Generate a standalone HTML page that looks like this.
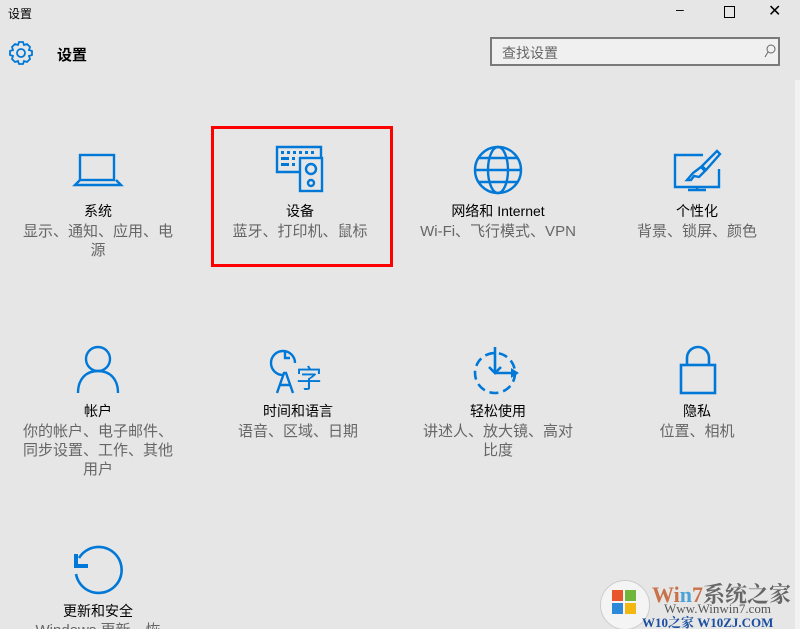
<!DOCTYPE html>
<html><head><meta charset="utf-8"><style>
html,body{margin:0;width:800px;height:629px;overflow:hidden}
body{background:#e6e6e6;font-family:"Liberation Sans","Noto Sans CJK SC",sans-serif;position:relative}
.a{position:absolute}
.t{position:absolute;width:190px;text-align:center;font-size:14px;color:#000;line-height:19px}
.s{position:absolute;width:156px;text-align:center;font-size:15px;color:#666;line-height:19px}
svg{position:absolute;overflow:visible}
</style></head><body>
<div class="a" style="left:8px;top:5px;font-size:12px;color:#000">设置</div>
<div class="a" style="left:676px;top:1px;font-size:14px;color:#000">–</div>
<div class="a" style="left:724px;top:6px;width:9px;height:10px;border:1px solid #000"></div>
<div class="a" style="left:768px;top:1px;font-size:16px;color:#000">✕</div>
<svg style="left:8px;top:40px" width="26" height="26" viewBox="0 0 26 26"><g fill="none" stroke="#0078d7" stroke-width="1.8"><circle cx="13" cy="13" r="4"/><path d="M11 2h4l1 3 3-1 3 3-1 3 3 1v4l-3 1 1 3-3 3-3-1-1 3h-4l-1-3-3 1-3-3 1-3-3-1v-4l3-1-1-3 3-3 3 1z"/></g></svg>
<div class="a" style="left:57px;top:44px;font-size:15px;font-weight:bold">设置</div>
<div class="a" style="left:490px;top:37px;width:290px;height:29px;border:2px solid #7a7a7a;background:#f0f0f0;box-sizing:border-box"></div>
<div class="a" style="left:502px;top:43px;font-size:14px;color:#666">查找设置</div>
<svg style="left:764px;top:44px" width="12" height="14"><circle cx="7" cy="5" r="4" fill="none" stroke="#666"/><path d="M4 8L1 13" stroke="#666"/></svg>
<div class="a" style="left:795px;top:80px;width:5px;height:549px;background:#f2f2f2"></div>
<div class="a" style="left:211px;top:126px;width:176px;height:135px;border:3px solid #f00"></div>

<svg style="left:73px;top:153px" width="50" height="34"><g fill="none" stroke="#0078d7" stroke-width="2.4"><rect x="7" y="2" width="34" height="25"/><path d="M7 27L2 32h46l-5-5"/></g></svg>
<svg style="left:275px;top:145px" width="50" height="48"><g fill="none" stroke="#0078d7" stroke-width="2.4"><path d="M25 27H2V2h44v10"/><rect x="25" y="13" width="22" height="33"/><circle cx="36" cy="24" r="5"/><circle cx="36" cy="38" r="3"/></g><g fill="#0078d7"><rect x="6" y="6" width="3" height="3"/><rect x="12" y="6" width="3" height="3"/><rect x="18" y="6" width="3" height="3"/><rect x="24" y="6" width="3" height="3"/><rect x="30" y="6" width="3" height="3"/><rect x="36" y="6" width="3" height="3"/><rect x="6" y="12" width="8" height="3"/><rect x="17" y="12" width="3" height="3"/><rect x="6" y="18" width="8" height="3"/><rect x="17" y="18" width="3" height="3"/></g></svg>
<svg style="left:473px;top:145px" width="50" height="50"><g fill="none" stroke="#0078d7" stroke-width="2.4"><circle cx="25" cy="25" r="23"/><ellipse cx="25" cy="25" rx="10" ry="23"/><path d="M2 25h46M6 13h38M6 37h38"/></g></svg>
<svg style="left:673px;top:149px" width="48" height="42"><g fill="none" stroke="#0078d7" stroke-width="2.4"><path d="M30 6H2v32h44V20"/><path d="M24 38v4M15 41h18"/><path d="M44 2l3 3-14 16-4-4zM28 18l4 4-6 6-5-1-3 4h-4l6-7z"/></g></svg>
<div class="t" style="left:3px;top:202px">系统</div><div class="s" style="left:20px;top:222px">显示、通知、应用、电源</div>
<div class="t" style="left:205px;top:202px">设备</div><div class="s" style="left:222px;top:222px">蓝牙、打印机、鼠标</div>
<div class="t" style="left:403px;top:202px">网络和 Internet</div><div class="s" style="left:395px;top:222px;width:206px">Wi-Fi、飞行模式、VPN</div>
<div class="t" style="left:602px;top:202px">个性化</div><div class="s" style="left:619px;top:222px">背景、锁屏、颜色</div>

<svg style="left:75px;top:345px" width="46" height="50"><g fill="none" stroke="#0078d7" stroke-width="2.4"><circle cx="23" cy="14" r="12"/><path d="M3 48c0-14 8-22 20-22s20 8 20 22"/></g></svg>
<svg style="left:273px;top:345px" width="52" height="50"><g fill="none" stroke="#0078d7" stroke-width="2.4"><path d="M22 18a12 12 0 1 0-12 12"/><path d="M12 5v8h5"/><path d="M4 48L11 28h2l7 20M7 40h10"/></g><text x="23" y="43" font-size="26" fill="#0078d7" font-family="Noto Sans CJK SC">字</text></svg>
<svg style="left:473px;top:345px" width="52" height="50"><g fill="none" stroke="#0078d7" stroke-width="2.6"><circle cx="22" cy="28" r="20" stroke-dasharray="9 5"/><path d="M22 2v26M16 22l6 6 6-6M22 28h18"/></g><path d="M38 23l8 5-8 5z" fill="#0078d7"/></svg>
<svg style="left:678px;top:345px" width="40" height="50"><g fill="none" stroke="#0078d7" stroke-width="2.6"><path d="M9 20V13a11 11 0 0 1 22 0v7"/><rect x="3" y="20" width="34" height="28"/></g></svg>
<div class="t" style="left:3px;top:402px">帐户</div><div class="s" style="left:20px;top:422px">你的帐户、电子邮件、同步设置、工作、其他用户</div>
<div class="t" style="left:203px;top:402px">时间和语言</div><div class="s" style="left:220px;top:422px">语音、区域、日期</div>
<div class="t" style="left:403px;top:402px">轻松使用</div><div class="s" style="left:420px;top:422px">讲述人、放大镜、高对比度</div>
<div class="t" style="left:602px;top:402px">隐私</div><div class="s" style="left:619px;top:422px">位置、相机</div>

<svg style="left:72px;top:544px" width="54" height="52"><g fill="none" stroke="#0078d7" stroke-width="2.6"><path d="M7 14A23 23 0 1 1 4 30"/></g><path d="M2 10h4v10h10v4H2z" fill="#0078d7"/></svg>
<div class="t" style="left:3px;top:602px">更新和安全</div><div class="s" style="left:20px;top:621px">Windows 更新、恢</div>

<div class="a" style="left:600px;top:580px;width:48px;height:48px;border-radius:50%;background:#f4f4f4;border:1px solid #ccc"></div>
<div class="a" style="left:612px;top:590px;width:11px;height:11px;background:#e8552a"></div>
<div class="a" style="left:625px;top:590px;width:11px;height:11px;background:#6fb63a"></div>
<div class="a" style="left:612px;top:603px;width:11px;height:11px;background:#2c8ad8"></div>
<div class="a" style="left:625px;top:603px;width:11px;height:11px;background:#f3b712"></div>
<div class="a" style="left:652px;top:578px;font-size:22px;font-weight:bold;font-family:'Liberation Serif','Noto Serif CJK SC',serif;color:#c8724a;white-space:nowrap">Wi<span style="color:#4aa3d8">n</span>7<span style="color:#666">系统之家</span></div>
<div class="a" style="left:664px;top:601px;font-size:13px;color:#555;font-family:'Liberation Serif',serif">Www.Winwin7.com</div>
<div class="a" style="left:642px;top:612px;font-size:13px;color:#1a4fa0;font-weight:bold;font-family:'Liberation Serif','Noto Serif CJK SC',serif;white-space:nowrap">W10之家 W10ZJ.COM</div>
</body></html>
